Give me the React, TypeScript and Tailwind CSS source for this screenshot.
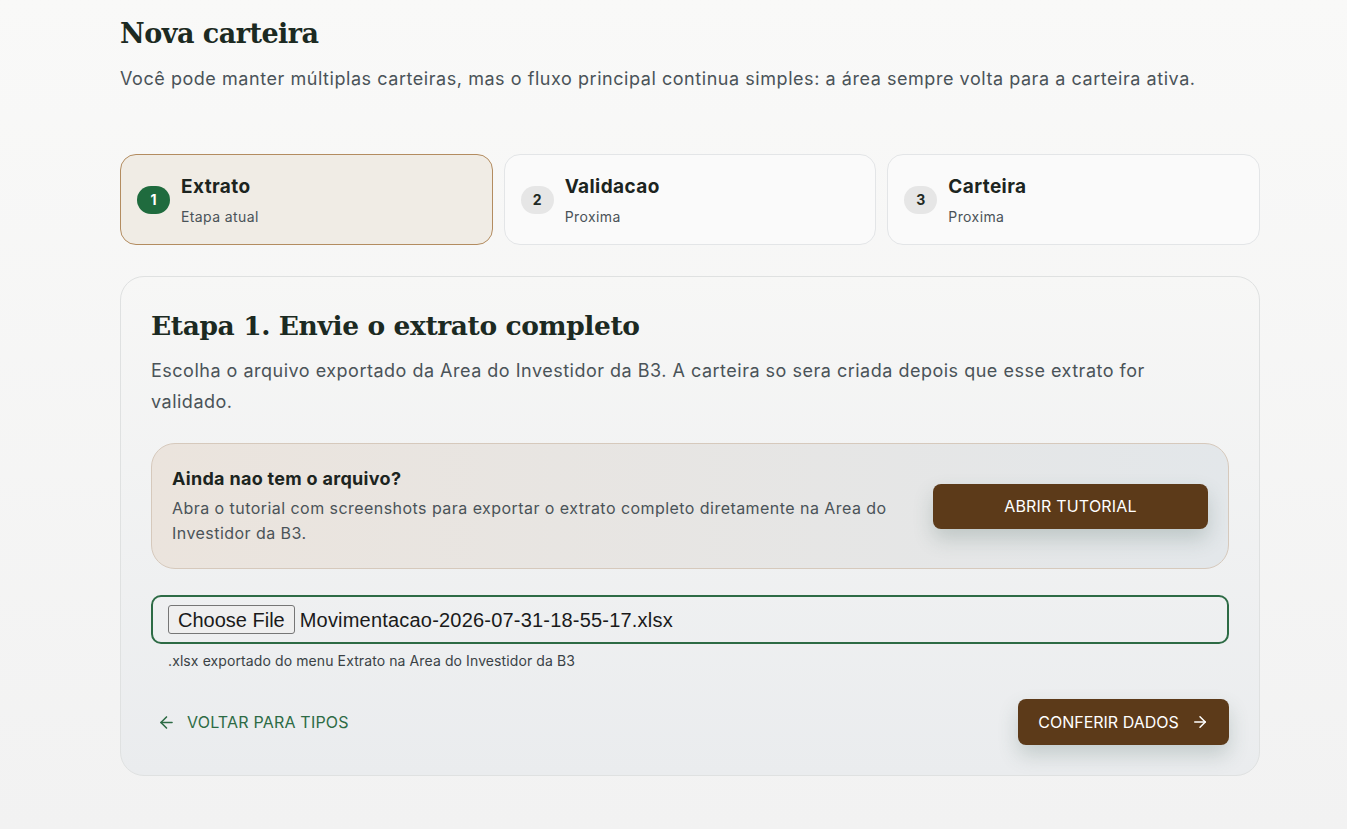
import { ArrowLeft, ArrowRight } from "lucide-react";

const serif = { fontFamily: '"DejaVu Serif", "Liberation Serif", serif' };

interface Step {
  n: number;
  title: string;
  sub: string;
  active?: boolean;
}

const steps: Step[] = [
  { n: 1, title: "Extrato", sub: "Etapa atual", active: true },
  { n: 2, title: "Validacao", sub: "Proxima" },
  { n: 3, title: "Carteira", sub: "Proxima" },
];

export default function App() {
  return (
    <div className="min-h-[829px] bg-gradient-to-b from-[#f9f9f8] to-[#f2f2f2] font-['Inter',sans-serif] text-[#1f2a24]">
      <div className="w-[1140px] ml-[120px] pt-[16px] pb-[54px]">
        <h1 className="text-[27px] leading-[36px] font-bold tracking-[-0.5px] text-[#1c2a22]" style={serif}>
          Nova carteira
        </h1>
        <p className="mt-[13px] text-[18px] leading-[28px] tracking-[0.55px] text-[#4a5358]">
          Você pode manter múltiplas carteiras, mas o fluxo principal continua simples: a área sempre volta para a carteira ativa.
        </p>

        {/* Steps */}
        <div className="mt-[61px] grid grid-cols-3 gap-[11px]">
          {steps.map((s) => (
            <div
              key={s.n}
              className={`h-[91px] rounded-[16px] border flex items-center gap-[11px] pl-[16px] ${
                s.active ? "bg-[#f0ece5] border-[#b38c60]" : "bg-[#fafafa] border-[#e3e5e7]"
              }`}
            >
              <div
                className={`w-[33px] h-[28px] rounded-full flex items-center justify-center text-[14px] font-bold ${
                  s.active ? "bg-[#1f6b3e] text-white" : "bg-[#e6e6e6] text-[#1f2a24]"
                }`}
              >
                {s.n}
              </div>
              <div className="pt-[2px]">
                <div className="text-[19px] leading-[24px] font-bold tracking-[0.4px] text-[#1c2420]">{s.title}</div>
                <div className="mt-[9px] text-[14px] leading-[18px] tracking-[0.4px] text-[#4a5358]">{s.sub}</div>
              </div>
            </div>
          ))}
        </div>

        {/* Main card */}
        <div className="mt-[31px] rounded-[24px] border border-[#dfe1e1] bg-gradient-to-b from-[#f7f7f6] to-[#eaecee] px-[30px] pt-[30px] pb-[30px]">
          <h2 className="text-[26.5px] leading-[38px] font-bold tracking-[-0.4px] text-[#1c2a22]" style={serif}>
            Etapa 1. Envie o extrato completo
          </h2>
          <p className="mt-[10px] text-[18px] leading-[31px] tracking-[0.5px] text-[#4a5358] pr-[60px]">
            Escolha o arquivo exportado da Area do Investidor da B3. A carteira so sera criada depois que esse extrato for validado.
          </p>

          <div className="mt-[26px] rounded-[24px] border border-[#d6c9bc] bg-gradient-to-r from-[#ebe4dd] to-[#e3e7ea] pl-[20px] pr-[20px] h-[126px] flex items-center justify-between">
            <div className="w-[740px]">
              <div className="text-[18px] leading-[24px] font-bold tracking-[0.3px] text-[#1c2420]">Ainda nao tem o arquivo?</div>
              <p className="mt-[5px] text-[16px] leading-[25px] tracking-[0.45px] text-[#4a5358]">
                Abra o tutorial com screenshots para exportar o extrato completo diretamente na Area do Investidor da B3.
              </p>
            </div>
            <button className="w-[275px] h-[45px] rounded-[8px] bg-[#5c3a19] text-white text-[16px] tracking-[0.2px] shadow-[0_10px_20px_rgba(60,90,80,0.22)]">
              ABRIR TUTORIAL
            </button>
          </div>

          <div className="mt-[26px] h-[49px] rounded-[10px] border-2 border-[#2d6b45] flex items-center pl-[15px] gap-[5px] font-['Liberation_Sans',Arial,sans-serif] text-[20px] tracking-[0.2px] text-[#1a1a1a]">
            <span className="h-[29px] px-[9px] flex items-center bg-[#efefef] border border-[#767676] rounded-[3px] tracking-normal">
              Choose File
            </span>
            <span>Movimentacao-2026-07-31-18-55-17.xlsx</span>
          </div>
          <p className="mt-[8px] pl-[17px] text-[14px] leading-[18px] tracking-[0.1px] text-[#3a4246]">
            .xlsx exportado do menu Extrato na Area do Investidor da B3
          </p>

          <div className="mt-[29px] flex items-center justify-between">
            <button className="flex items-center gap-[11px] pl-[6px] text-[16px] tracking-[0.2px] text-[#2d6b45]">
              <ArrowLeft size={19} strokeWidth={2} />
              VOLTAR PARA TIPOS
            </button>
            <button className="w-[211px] h-[46px] rounded-[8px] bg-[#5c3a19] text-white text-[16px] flex items-center justify-center gap-[12px] shadow-[0_10px_20px_rgba(60,90,80,0.22)]">
              CONFERIR DADOS
              <ArrowRight size={18} strokeWidth={2} />
            </button>
          </div>
        </div>
      </div>
    </div>
  );
}
